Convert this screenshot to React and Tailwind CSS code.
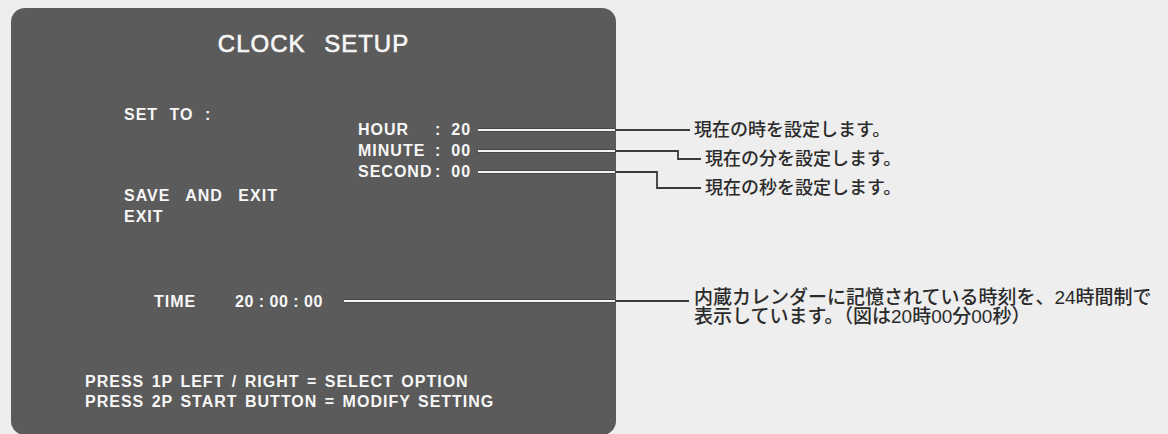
import React from 'react';

// leader lines from the screen menu to the notes on the right
const Leaders = () => (
  <svg
    className="absolute left-0 top-0 pointer-events-none"
    width="1168"
    height="434"
    viewBox="0 0 1168 434"
    fill="none"
  >
    <g stroke="#3a3a3a" strokeWidth="1.8">
      <path d="M478 130 H690" />
      <path d="M478 151 H678 V159 H701" />
      <path d="M478 172 H657 V188 H701" />
      <path d="M344 301 H689" />
    </g>
    <g stroke="#404040" strokeWidth="3.5">
      <path d="M478 130 H615" />
      <path d="M478 151 H615" />
      <path d="M478 172 H615" />
      <path d="M344 301 H615" />
    </g>
    <g stroke="#f4f4f4" strokeWidth="2">
      <path d="M478 130 H615" />
      <path d="M478 151 H615" />
      <path d="M478 172 H615" />
      <path d="M344 301 H615" />
    </g>
  </svg>
);

const Field = ({ label, value }) => (
  <div className="flex">
    <span className="w-[77px]">{label}</span>
    <span>:</span>
    <span className="ml-[10px]">{value}</span>
  </div>
);

const App = () => {
  return (
    <div className="relative w-[1168px] h-[434px] overflow-hidden bg-[#eeeeee] flex font-['Liberation_Sans',Arial,sans-serif]">
      {/* screen */}
      <div className="ml-[11px] mt-[8px] w-[605px] h-[427px] shrink-0 rounded-[14px] bg-[#5b5b5b] text-[#f7f7f7] flex flex-col">
        <h1 className="mt-[24px] text-center text-[24px] leading-[24px] font-normal tracking-[1px] [word-spacing:11px] [-webkit-text-stroke:0.6px_#f7f7f7]">
          CLOCK SETUP
        </h1>

        <div className="mt-[48px] flex pl-[113px] text-[16px] leading-[21px] font-bold tracking-[1px]">
          <div className="flex flex-col w-[234px]">
            <div className="[word-spacing:6px]">SET TO :</div>
            <div className="mt-[60px] [word-spacing:10px]">SAVE AND EXIT</div>
            <div>EXIT</div>
          </div>
          <div className="pt-[15px] flex flex-col">
            <Field label="HOUR" value="20" />
            <Field label="MINUTE" value="00" />
            <Field label="SECOND" value="00" />
          </div>
        </div>

        <div className="mt-[64px] flex pl-[143px] text-[16px] leading-[21px] font-bold tracking-[1px]">
          <span className="w-[81px]">TIME</span>
          <span className="tracking-[0.5px]">20 : 00 : 00</span>
        </div>

        <div className="mt-[60px] pl-[74px] text-[16px] leading-[20px] font-bold tracking-[1px] [word-spacing:2px]">
          <div>PRESS 1P LEFT / RIGHT = SELECT OPTION</div>
          <div>PRESS 2P START BUTTON = MODIFY SETTING</div>
        </div>
      </div>

      {/* notes */}
      <div className="ml-[78px] flex flex-col text-[#2b2b2b] font-medium font-['Liberation_Sans','Noto_Sans_CJK_JP',sans-serif]">
        <div className="mt-[116px] text-[18px] leading-[29px]">
          <div>現在の時を設定します。</div>
          <div className="pl-[11px]">現在の分を設定します。</div>
          <div className="pl-[11px]">現在の秒を設定します。</div>
        </div>
        <div className="mt-[85px] text-[19px] leading-[19px]">
          <div>内蔵カレンダーに記憶されている時刻を、24時間制で</div>
          <div>表示しています。（図は20時00分00秒）</div>
        </div>
      </div>

      <Leaders />
    </div>
  );
};

export default App;
